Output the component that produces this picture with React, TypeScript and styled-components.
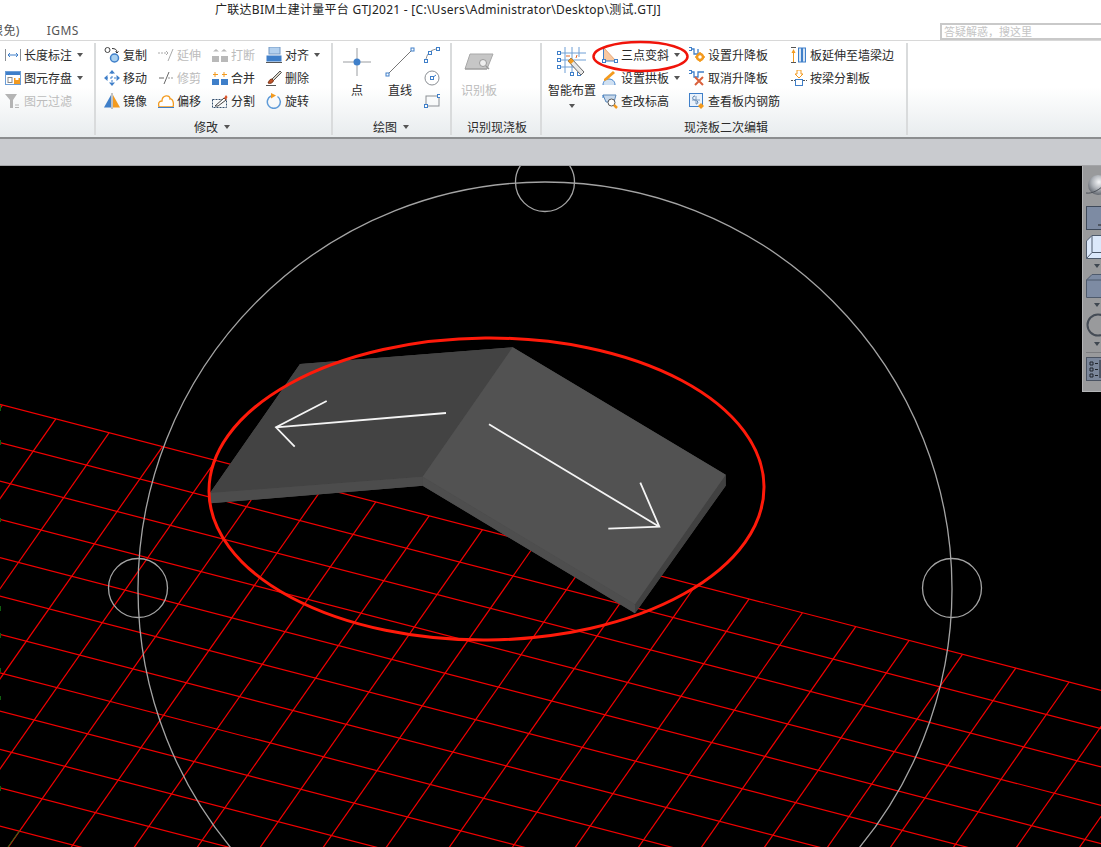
import * as React from "react";
import styled, { createGlobalStyle } from "styled-components";

const GlobalStyle = createGlobalStyle`
    html, body {
        margin: 0;
        padding: 0;
        background: #000;
    }
    body {
        font-family: "Noto Sans", "Noto Sans CJK SC", sans-serif;
    }
`;

const Page = styled.div`
    width: 1101px;
    height: 847px;
    display: flex;
    flex-direction: column;
    overflow: hidden;
    background: #fff;
`;

const TitleBar = styled.div`
    height: 20px;
    padding-left: 215px;
    font-size: 12px;
    letter-spacing: 0.27px;
    line-height: 20px;
    color: #222;
    white-space: nowrap;
`;

const TabRow = styled.div`
    height: 20px;
    display: flex;
    align-items: center;
    gap: 27px;
    margin-left: -9px;
    border-bottom: 1px solid #d8d8d8;
    font-size: 12px;
    letter-spacing: 0.4px;
    color: #555;
`;

const SearchBox = styled.div`
    margin-left: auto;
    width: 157px;
    height: 13px;
    margin-top: 2px;
    padding-left: 2px;
    border: 2px solid #c9c9c9;
    border-right: none;
    font-size: 11px;
    letter-spacing: 0;
    line-height: 13px;
    color: #c4c4c4;
    white-space: nowrap;
`;

const Ribbon = styled.div`
    height: 98px;
    display: flex;
    box-sizing: border-box;
    padding-top: 2px;
    border-bottom: 2px solid #8c8e90;
    background: linear-gradient(#fff 0%, #fff 48%, #e8ecee 100%);
`;

const Group = styled.div<{ $width: number }>`
    width: ${p => p.$width}px;
    height: 92px;
    box-sizing: border-box;
    display: flex;
    flex-direction: column;
    border-right: 2px solid #d9dbdc;
`;

const GroupBody = styled.div<{ $pad?: number }>`
    height: 74px;
    flex: none;
    display: flex;
    padding-left: ${p => p.$pad || 0}px;
`;

const GroupLabel = styled.div<{ $shift?: number }>`
    height: 20px;
    flex: none;
    display: flex;
    align-items: center;
    justify-content: center;
    gap: 6px;
    font-size: 12px;
    color: #2a2a2a;
    padding-left: ${p => Math.max(p.$shift || 0, 0)}px;
    padding-right: ${p => Math.max(-(p.$shift || 0), 0)}px;
`;

const Column = styled.div<{ $width: number; $gap?: number }>`
    width: ${p => p.$width}px;
    flex: none;
    display: flex;
    flex-direction: column;
    margin-left: ${p => p.$gap || 0}px;
`;

const ToolRow = styled.div<{ $off?: boolean }>`
    height: 23px;
    display: flex;
    align-items: center;
    gap: 3px;
    font-size: 12px;
    white-space: nowrap;
    color: ${p => (p.$off ? "#bcbcbc" : "#2a2a2a")};
    svg {
        flex: none;
        width: 16px;
        height: 16px;
    }
`;

const BigTool = styled.div<{ $width: number; $off?: boolean }>`
    width: ${p => p.$width}px;
    flex: none;
    display: flex;
    flex-direction: column;
    align-items: center;
    font-size: 12px;
    white-space: nowrap;
    color: ${p => (p.$off ? "#bcbcbc" : "#2a2a2a")};
`;

const BigIcon = styled.div`
    height: 39px;
    box-sizing: border-box;
    padding-bottom: 2px;
    display: flex;
    align-items: center;
    justify-content: center;
`;

const BigCaption = styled.div`
    height: 18px;
    line-height: 18px;
`;

const Caret = styled.span<{ $gap?: number }>`
    display: inline-block;
    width: 0;
    height: 0;
    margin-left: ${p => p.$gap || 0}px;
    border-left: 3.5px solid transparent;
    border-right: 3.5px solid transparent;
    border-top: 4px solid #555;
`;

const BigCaret = styled(Caret)`
    margin-top: 4px;
`;

const Strip = styled.div`
    height: 26px;
    background: #c9cbcf;
    border-bottom: 1px solid #a4a5a8;
`;

const Viewport = styled.div`
    position: relative;
    flex: 1;
    background: #000;
    svg.scene {
        display: block;
    }
`;

const ViewTools = styled.div`
    position: absolute;
    left: 1082px;
    top: 0;
    width: 19px;
    height: 226px;
    box-sizing: border-box;
    padding: 8px 0 0 3px;
    display: flex;
    flex-direction: column;
    overflow: hidden;
    background: #999a9c;
    border-left: 1px solid #b5b6b8;
    border-bottom: 1px solid #b5b6b8;
`;

const ViewButton = styled.div<{ $height: number; $after: number }>`
    width: 30px;
    height: ${p => p.$height}px;
    flex: none;
    margin-bottom: ${p => p.$after}px;
    svg {
        display: block;
    }
`;

const ViewCaret = styled(Caret)`
    display: block;
    margin: 0 0 6px 8px;
    border-top-color: #3f4750;
`;

const Divider = styled.div`
    height: 1px;
    width: 30px;
    margin-bottom: 4px;
    background: #7c7d80;
`;

const Callout = styled.svg`
    position: absolute;
    left: 590px;
    top: 39px;
    width: 102px;
    height: 36px;
    pointer-events: none;
`;

const BLUE = "#3f7fc9";
const ORANGE = "#f39a1e";
const GRAY = "#8b8f94";

const I = ({ children }: { children: React.ReactNode }) => (
    <svg viewBox="0 0 16 16" fill="none">{children}</svg>
);

const Handle = ({ x, y }: { x: number; y: number }) => (
    <rect x={x - 1.5} y={y - 1.5} width="3" height="3" fill="#fff" stroke={BLUE} />
);

const icons: Record<string, React.ReactNode> = {
    dim: <I><path d="M.5 2v12M15.5 2v12" stroke={GRAY} /><path d="M3 8h10M5 6 3 8l2 2M11 6l2 2-2 2" stroke={BLUE} /></I>,
    save: <I><rect x=".5" y="1.5" width="15" height="13" fill="#fff" stroke="#6d9ed6" /><rect x="1" y="2" width="14" height="3" fill={BLUE} /><rect x="3" y="7.5" width="4" height="5" stroke="#888" /><rect x="9" y="8" width="6" height="6" fill={ORANGE} /><rect x="10.5" y="8" width="3" height="2" fill="#fff" /></I>,
    filter: <I><path d="M0 1h12L8 7v8H5V7z" fill="#b4b4b4" /><path d="M10 12h4M10 14.5h4" stroke="#b4b4b4" /></I>,
    copy: <I><circle cx="3.5" cy="3" r="2.5" stroke="#444" /><circle cx="10.5" cy="11" r="4" fill="#a8d0f0" stroke={BLUE} strokeWidth="1.5" /><path d="M8 1.5c3 0 5 1 5 4M11.5 4.5l1.5 1.5 1.5-1.5" stroke="#333" /></I>,
    extend: <I><path d="M0 6h8" stroke="#aaa" strokeDasharray="2 1" /><path d="M10 14 15 2" stroke="#aaa" /><path d="m8 4 2 2-2 2" stroke="#aaa" /></I>,
    break: <I><path d="M4 2 1 4.500h6zM12 2 9 4.500h6z" fill="#b9b9b9" /><rect x="0" y="9" width="7" height="6" fill="#b9b9b9" /><rect x="9" y="9" width="7" height="6" fill="#b9b9b9" /></I>,
    align: <I><rect x="3" y="0" width="11" height="7" fill="#b3d0ee" stroke="#7298c4" /><rect x="0.500" y="8.500" width="15" height="6" fill={BLUE} /><path d="M0 15.500h16" stroke="#555" /></I>,
    move: <I><path d="M8 2v12M2 8h12" stroke={BLUE} strokeDasharray="2 2" /><path d="m8 0 3 3.500H5zM8 16l3-3.500H5zM0 8l3.500-3v6zM16 8l-3.500-3v6z" fill={BLUE} /></I>,
    trim: <I><path d="M1 8h5" stroke="#666" /><path d="M6 14 11 2" stroke="#666" /><path d="M10 8h6" stroke="#999" strokeDasharray="2 1" /></I>,
    merge: <I><rect x="0" y="9" width="7" height="6" fill={BLUE} /><rect x="9" y="9" width="7" height="6" fill={BLUE} /><path d="M3 2v5M1 4.500h5" stroke={ORANGE} /><path d="M12 2v5M10 4.500h5" stroke={ORANGE} /></I>,
    remove: <I><path d="M6 9 14 1l1.500 1.500-8 8z" fill="#d9d2c3" stroke="#555" /><path d="M6 9c-3 0-3 3-4 4 2 1 5 0 5.500-2.500z" fill="#c1532a" stroke="#7a3618" /><path d="M0 15.500h10" stroke="#555" /></I>,
    mirror: <I><path d="M7 2 0 14.500h7z" fill={BLUE} /><path d="M9 2v12.500h7z" fill={ORANGE} /><path d="M8 0v16" stroke="#888" /></I>,
    offset: <I><path d="M1 14c-1-4 0-6 3-6 0-6 8-7 8-2 3-1 4 5 3 8z" fill="#fff" stroke={ORANGE} strokeWidth="1.300" /><path d="M0 14.500h16" stroke={BLUE} /></I>,
    split: <I><rect x=".5" y="6.500" width="14" height="8" stroke="#35506f" strokeDasharray="2 1" /><path d="M3 13 12 5l2 2-8 6z" fill="#fff" stroke="#444" /><path d="m12 5 2-3 1.500 2-1.500 3z" fill="#d9542b" /></I>,
    rotate: <I><path d="M5 3A6.500 6.500 0 1 0 11.500 3.500" stroke="#5f9bd8" strokeWidth="1.500" /><path d="M5 0v5.500L10 2.500z" fill={ORANGE} /></I>,
    arc: <I><path d="M2 14c0-7 5-12 12-12" stroke={GRAY} /><Handle x={2} y={14} /><Handle x={6} y={6} /><Handle x={14} y={2} /></I>,
    circle: <I><circle cx="8" cy="8" r="7" stroke={GRAY} /><path d="m8 8 4-3" stroke={BLUE} /><Handle x={8} y={8} /></I>,
    rect: <I><rect x="2" y="3" width="13" height="10" stroke={GRAY} /><Handle x={2} y={13} /><Handle x={15} y={3} /></I>,
    tilt: <I><path d="M2 1v13h12z" fill="#f8c9a2" /><path d="M1.500 1v13H14" stroke={BLUE} /><path d="M2 1 14 14" stroke="#e8a878" /><Handle x={2} y={14} /><Handle x={14} y={14} /></I>,
    arch: <I><path d="M1 15c0-4 3-6 6-6s6 2 6 6" fill="#cfe0f2" stroke={BLUE} /><path d="M2 9 11 1l2 2-8 7-3 1z" fill={ORANGE} /></I>,
    level: <I><path d="M1 2h13l-2 7H4z" fill="#c6d8ec" stroke="#5a87b8" /><path d="M1 2v3" stroke={BLUE} /><circle cx="9.500" cy="9.500" r="3.500" fill="#fff" stroke="#555" /><path d="m12 12 3 3" stroke={ORANGE} strokeWidth="2.500" /></I>,
    raise: <I><path d="M1 2h4v5h4V2" stroke={BLUE} strokeWidth="1.300" /><Handle x={1} y={2} /><circle cx="11" cy="10" r="3" stroke={ORANGE} strokeWidth="2.500" /><path d="M11 5v2M11 13v2M6 10h2M14 10h2" stroke={ORANGE} strokeWidth="1.500" /></I>,
    cancel: <I><path d="M1 2h4v5h4V2h6" stroke={BLUE} strokeWidth="1.300" /><Handle x={1} y={2} /><path d="m6 7 8 8M14 7l-8 8" stroke="#d9603b" strokeWidth="2" /></I>,
    rebar: <I><rect x=".5" y=".5" width="13" height="13" fill="#eaf2fb" stroke={BLUE} /><path d="M6 3c-3 0-3 4 0 4s4 4 1 4" stroke="#4c77a8" /><path d="M3 7h8M7 3v8" stroke="#7f9dc0" /><path d="m12 10 3 3-3 3-3-3z" fill={ORANGE} /></I>,
    stretch: <I><path d="M0 .5h5M0 15.500h5" stroke="#555" /><path d="M2.500 15V5" stroke={ORANGE} /><path d="M2.500 2 .5 6h4z" fill={ORANGE} /><rect x="7.500" y="1" width="3" height="14" fill="#d6e5f5" stroke={BLUE} /><rect x="11.500" y="1" width="3" height="14" fill="#d6e5f5" stroke={BLUE} /></I>,
    cutBeam: <I><path d="M6 0h4v4h2L8 8 4 4h2z" fill="#fff" stroke={ORANGE} /><rect x="4.500" y="9.500" width="7" height="6" fill="#fff" stroke={BLUE} /><path d="M0 10.500h4M12 10.500h4" stroke="#555" strokeDasharray="2 1" /></I>,
};

const Tool = ({ icon, text, off, caret }: { icon: string; text?: string; off?: boolean; caret?: boolean }) => (
    <ToolRow $off={off}>
        {icons[icon]}
        {text ? <span>{text}</span> : null}
        {caret ? <Caret $gap={2} /> : null}
    </ToolRow>
);

const PointIcon = () => (
    <svg width="30" height="30" viewBox="0 0 30 30" fill="none">
        <path d="M15 1v28M1 15h28" stroke="#9a9da1" />
        <circle cx="15" cy="15" r="3.500" fill={BLUE} />
    </svg>
);

const LineIcon = () => (
    <svg width="30" height="30" viewBox="0 0 30 30" fill="none">
        <path d="M2.500 27.500 27.500 2.500" stroke="#777" />
        <Handle x={2.500} y={27.500} />
        <Handle x={27.500} y={2.500} />
    </svg>
);

const DetectIcon = () => (
    <svg width="30" height="18" viewBox="0 0 30 18" fill="none">
        <path d="M6 1h23l-6 15H1z" fill="#c6c6c6" stroke="#a8a8a8" />
        <path d="M1 16h22" stroke="#999" />
        <circle cx="19" cy="10" r="3.500" fill="#eee" stroke="#999" />
        <path d="m22 13 3 3" stroke="#999" strokeWidth="1.500" />
    </svg>
);

const SmartIcon = () => (
    <svg width="30" height="32" viewBox="0 0 30 32" fill="none">
        <path d="M1 7h28M1 14h28M1 21h20M8 1v26M15 1v26M22 1v10" stroke="#6e9fd6" />
        <Handle x={2} y={7} />
        <Handle x={2} y={14} />
        <Handle x={2} y={21} />
        <Handle x={15} y={28} />
        <Handle x={22} y={28} />
        <path d="m14 12 13 14-3 3-13-14z" fill="#e8e8e8" stroke="#666" />
        <path d="m14 12 3 3-3 3-3-3z" fill={ORANGE} />
        <path d="M9 10h4M20 9l-1 3" stroke="#e0662b" />
    </svg>
);

const Sphere = () => (
    <svg width="22" height="22" viewBox="0 0 22 22">
        <defs>
            <radialGradient id="ball" cx="0.55" cy="0.35" r="0.7">
                <stop offset="0" stopColor="#f4f5f7" />
                <stop offset="0.5" stopColor="#aeb2b8" />
                <stop offset="1" stopColor="#565b63" />
            </radialGradient>
        </defs>
        <circle cx="12" cy="11" r="10" fill="url(#ball)" />
        <path d="M0 19c6 1 14-3 21-11" stroke="#4b5058" fill="none" />
    </svg>
);

const LevelBox = () => (
    <svg width="30" height="24" viewBox="0 0 30 24">
        <rect x=".5" y=".5" width="29" height="23" fill="#7d8ba3" stroke="#3f4a5a" />
        <path d="M12 19h3" stroke="#222" />
    </svg>
);

const CubeIcon = () => (
    <svg width="30" height="24" viewBox="0 0 30 24" fill="none">
        <path d="M.5 6 6 .5h24v23H.5z" fill="#7d8ba3" stroke="#4e5a6c" />
        <path d="M.5 6H30" stroke="#4e5a6c" />
    </svg>
);

const OpenCube = () => (
    <svg width="30" height="24" viewBox="0 0 30 24" fill="none">
        <path d="M.5 6 6 .5h24v23H.5z" fill="#dbe8fb" stroke="#4e5a6c" />
        <path d="M6 .5v17H30M6 17.500l-5.500 6" stroke="#4e5a6c" />
    </svg>
);

const RingIcon = () => (
    <svg width="30" height="24" viewBox="0 0 30 24" fill="none">
        <circle cx="12" cy="12" r="10.500" stroke="#454c56" strokeWidth="2" />
    </svg>
);

const ListIcon = () => (
    <svg width="30" height="24" viewBox="0 0 30 24" fill="none">
        <rect x=".5" y=".5" width="29" height="23" fill="#7b879b" stroke="#4a5362" />
        <path d="M4 5h3v3H4zM4 11h3v3H4zM4 17h3v3H4zM9 6.500h3M9 12.500h3M9 18.500h3M14 3v18" stroke="#20252c" />
    </svg>
);

// orthographic floor grid, measured from the picture
const ORIGIN = { x: 2.5, y: 405 };
const U = { x: 53.33, y: 13.85 };
const V = { x: -22.7, y: 32.45 };

const gridPoint = (i: number, j: number) => ({
    x: ORIGIN.x + U.x * i + V.x * j,
    y: ORIGIN.y + U.y * i + V.y * j,
});

const FloorGrid = () => {
    const lines: React.ReactNode[] = [];
    for (let j = 0; j <= 22; j++) {
        const a = gridPoint(-16, j);
        const b = gridPoint(26, j);
        lines.push(<line key={"u" + j} x1={a.x} y1={a.y} x2={b.x} y2={b.y} />);
    }
    for (let i = 0; i <= 34; i++) {
        const a = gridPoint(i, 0);
        const b = gridPoint(i, 22);
        lines.push(<line key={"v" + i} x1={a.x} y1={a.y} x2={b.x} y2={b.y} />);
    }
    return <g stroke="#f40000" strokeWidth="1.2">{lines}</g>;
};

const Scene = () => (
    <svg className="scene" width="1101" height="681" viewBox="0 166 1101 681" fill="none">
        <FloorGrid />
        <path d="M8 847 20 830" stroke="#1c7a1c" />
        <path d="M.5 405v6M.5 440v5M.5 518v4M.5 606v5M.5 633v5M.5 668v4M.5 696v4M.5 786v5" stroke="#0f5f0f" />
        <g stroke="#a4a4a4" strokeWidth="1.3">
            <circle cx="545" cy="589" r="407" />
            <circle cx="545" cy="182" r="29.500" />
            <circle cx="138" cy="588" r="29.500" />
            <circle cx="952" cy="588" r="29.500" />
        </g>
        {/* backing shape so the faces leave no dark seam where they meet */}
        <path d="M300 364 512.700 347.300 725.700 474.700V485.700L635 613.300 422.700 485.700 210.700 503.300 210 493z" fill="#4a4a4a" />
        <path d="M300 364 512.700 347.300 422.700 476.700 210 493z" fill="#434343" />
        <path d="M210 493 422.700 476.700V485.700L210.700 503.300z" fill="#4c4c4c" />
        <path d="M422.700 476.700 635 604.300V613.300L422.700 485.700z" fill="#4e4e4e" />
        <path d="M725.700 474.700V485.700L635 613.300V604.300z" fill="#414141" />
        <path d="M512.700 347.300 725.700 474.700 635 604.300 422.700 476.700z" fill="#525252" />
        <g stroke="#f4f4f4" strokeWidth="1.800">
            <path d="M446 413 276 427.300M326.700 401 276 427.300 294.700 446.700" />
            <path d="M489 424.300 659.300 526.700M640.300 482.700 659.300 526.700 608.300 528.700" />
        </g>
        <ellipse cx="486.500" cy="489" rx="277.500" ry="151" transform="rotate(-0.5 486.500 489)" stroke="#ff1a0a" strokeWidth="3" />
    </svg>
);

const App = () => (
    <Page>
        <GlobalStyle />
        <TitleBar>广联达BIM土建计量平台 GTJ2021 - [C:\Users\Administrator\Desktop\测试.GTJ]</TitleBar>
        <TabRow>
            <span>限免)</span>
            <span>IGMS</span>
            <SearchBox>答疑解惑，搜这里</SearchBox>
        </TabRow>
        <Ribbon>
            <Group $width={96}>
                <GroupBody $pad={5}>
                    <Column $width={90}>
                        <Tool icon="dim" text="长度标注" caret />
                        <Tool icon="save" text="图元存盘" caret />
                        <Tool icon="filter" text="图元过滤" off />
                    </Column>
                </GroupBody>
                <GroupLabel />
            </Group>
            <Group $width={237}>
                <GroupBody $pad={8}>
                    <Column $width={54}>
                        <Tool icon="copy" text="复制" />
                        <Tool icon="move" text="移动" />
                        <Tool icon="mirror" text="镜像" />
                    </Column>
                    <Column $width={54}>
                        <Tool icon="extend" text="延伸" off />
                        <Tool icon="trim" text="修剪" off />
                        <Tool icon="offset" text="偏移" />
                    </Column>
                    <Column $width={54}>
                        <Tool icon="break" text="打断" off />
                        <Tool icon="merge" text="合并" />
                        <Tool icon="split" text="分割" />
                    </Column>
                    <Column $width={60}>
                        <Tool icon="align" text="对齐" caret />
                        <Tool icon="remove" text="删除" />
                        <Tool icon="rotate" text="旋转" />
                    </Column>
                </GroupBody>
                <GroupLabel $shift={-3}>修改<Caret /></GroupLabel>
            </Group>
            <Group $width={119}>
                <GroupBody>
                    <BigTool $width={48}>
                        <BigIcon><PointIcon /></BigIcon>
                        <BigCaption>点</BigCaption>
                    </BigTool>
                    <BigTool $width={38}>
                        <BigIcon><LineIcon /></BigIcon>
                        <BigCaption>直线</BigCaption>
                    </BigTool>
                    <Column $width={20} $gap={5}>
                        <Tool icon="arc" />
                        <Tool icon="circle" />
                        <Tool icon="rect" />
                    </Column>
                </GroupBody>
                <GroupLabel $shift={-1}>绘图<Caret /></GroupLabel>
            </Group>
            <Group $width={90}>
                <GroupBody $pad={9}>
                    <BigTool $width={36} $off>
                        <BigIcon><DetectIcon /></BigIcon>
                        <BigCaption>识别板</BigCaption>
                    </BigTool>
                </GroupBody>
                <GroupLabel $shift={2}>识别现浇板</GroupLabel>
            </Group>
            <Group $width={366}>
                <GroupBody>
                    <BigTool $width={60}>
                        <BigIcon><SmartIcon /></BigIcon>
                        <BigCaption>智能布置</BigCaption>
                        <BigCaret />
                    </BigTool>
                    <Column $width={87}>
                        <Tool icon="tilt" text="三点变斜" caret />
                        <Tool icon="arch" text="设置拱板" caret />
                        <Tool icon="level" text="查改标高" />
                    </Column>
                    <Column $width={102}>
                        <Tool icon="raise" text="设置升降板" />
                        <Tool icon="cancel" text="取消升降板" />
                        <Tool icon="rebar" text="查看板内钢筋" />
                    </Column>
                    <Column $width={110}>
                        <Tool icon="stretch" text="板延伸至墙梁边" />
                        <Tool icon="cutBeam" text="按梁分割板" />
                    </Column>
                </GroupBody>
                <GroupLabel $shift={4}>现浇板二次编辑</GroupLabel>
            </Group>
        </Ribbon>
        <Strip />
        <Viewport>
            <Scene />
            <ViewTools>
                <ViewButton $height={22} $after={10}><Sphere /></ViewButton>
                <ViewButton $height={24} $after={5}><LevelBox /></ViewButton>
                <ViewButton $height={24} $after={5}><OpenCube /></ViewButton>
                <ViewCaret />
                <ViewButton $height={24} $after={5}><CubeIcon /></ViewButton>
                <ViewCaret />
                <ViewButton $height={24} $after={5}><RingIcon /></ViewButton>
                <ViewCaret />
                <Divider />
                <ViewButton $height={24} $after={0}><ListIcon /></ViewButton>
            </ViewTools>
        </Viewport>
        <Callout viewBox="590 39 102 36" fill="none">
            <ellipse cx="640.500" cy="56.500" rx="47" ry="14.500" stroke="#f0140a" strokeWidth="2.500" />
        </Callout>
    </Page>
);

export default App;
